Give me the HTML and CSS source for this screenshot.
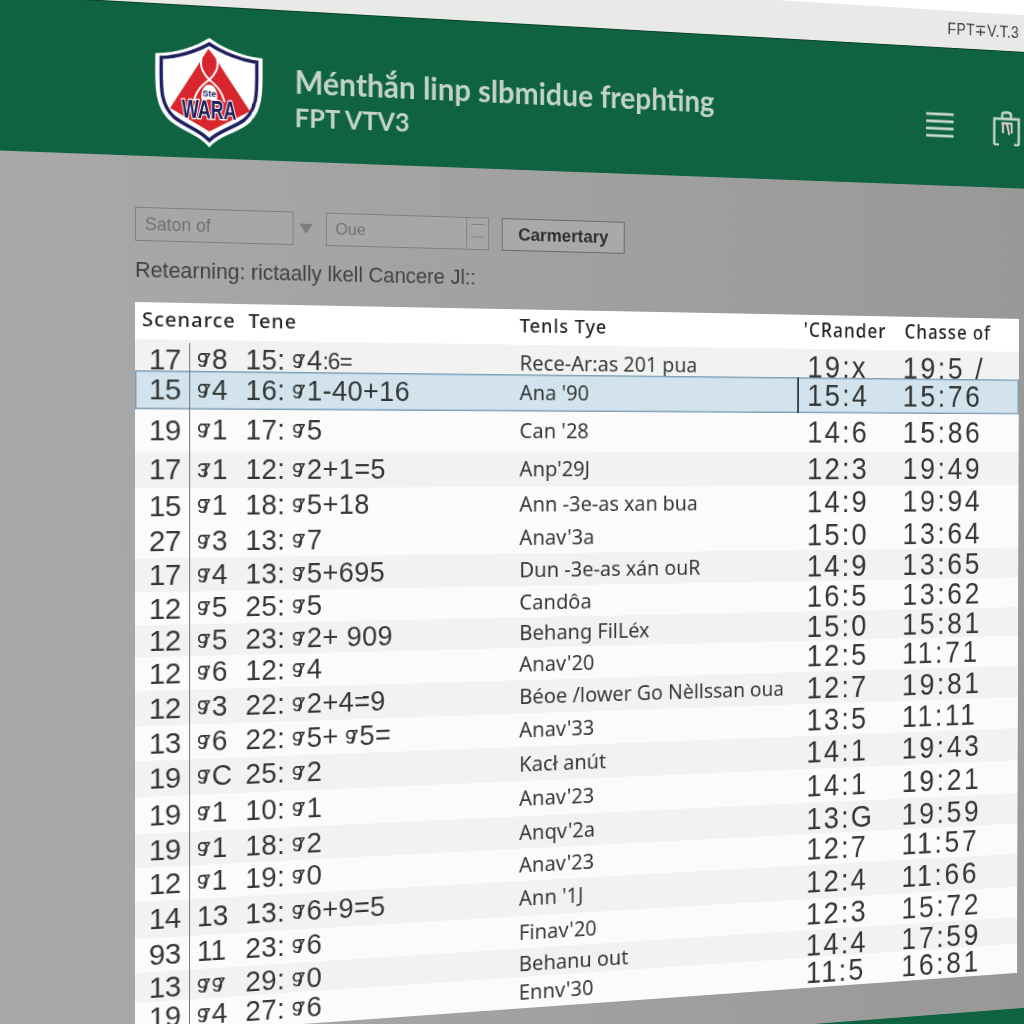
FILE: index.html
```html
<!DOCTYPE html>
<html lang="vi">
<head>
<meta charset="utf-8">
<title>FPT VTV3</title>
<link rel="stylesheet" href="styles.css">
</head>
<body>
<div class="page">
  <div class="topgap"></div>
  <div class="bar"><span class="bar-text">FPT∓V.T.3</span></div>
  <header class="hdr">
    <svg class="logo" viewBox="0 0 110 110">
      <path fill="#fff" d="M55 0C70 10 90 17 110 18C110 50 112 70 95 85C82 95 65 98 55 110C45 98 28 95 15 85C-2 70 0 50 0 18C20 17 40 10 55 0Z"/>
      <path fill="none" stroke="#1e2060" stroke-width="3.5" d="M55 6C68 14 88 21 104 22C104 50 106 68 91 81C79 90 64 93 55 103C46 93 31 90 19 81C4 68 6 50 6 22C22 21 42 14 55 6Z"/>
      <path fill="#d8262c" d="M54 11C60 17 64 24 68 30L97 72L55 94L15 72L42 30C46 24 50 17 54 11Z"/>
      <path fill="none" stroke="#fff" stroke-width="2" d="M47 21C45 30 49 36 55 42C61 36 65 30 63 21M55 42C47 48 42 53 39 64M55 42C63 48 68 53 71 64"/>
      <path fill="#fff" d="M47 62C46 53 50 47 55 47C60 47 64 53 63 62Z"/>
      <text class="logo-small" x="55" y="59" text-anchor="middle">Ste</text>
      <text class="logo-name" x="55" y="81" text-anchor="middle" textLength="56" lengthAdjust="spacingAndGlyphs">WARA</text>
    </svg>
    <div class="title"><div class="title-main">Ménthắn linp slbmidue frephting</div><div class="title-sub">FPT VTV3</div></div>
    <div class="actions">
      <svg class="ic-menu" viewBox="0 0 34 30"><path d="M0 3H34M0 11H34M0 19H34M0 27H34"/></svg>
      <svg class="ic-bag" viewBox="0 0 35 39"><path d="M2 38V9H33V38M2 38H8M33 38H27M12 9V4C12 1 23 1 23 4V9"/><path class="ic-inner" d="M11 14H25M13 14V25M18 14L21 27M24 15V25"/></svg>
    </div>
  </header>
  <main class="main">
    <div class="filters">
      <div class="select">Saton of</div>
      <div class="arrow"></div>
      <div class="input"><span class="input-text">Oue</span><span class="spin"><i></i><i></i></span></div>
      <button class="btn">Carmertary</button>
    </div>
    <div class="caption">Retearning: rictaally lkell Cancere Jl::</div>
    <div class="table">
      <div class="row head"><div class="c1">Scenarce</div><div class="c2"></div><div class="c3">Tene</div><div class="c4">Tenls Tye</div><div class="c5">'CRander</div><div class="c6">Chasse of</div></div>
      <div class="row alt first"><div class="c1">17</div><div class="c2"><span class="g">97</span>8</div><div class="c3">15:<span class="g">97</span>4<small>:6=</small></div><div class="c4">Rece-Ar:as 201 pua</div><div class="c5">19:x</div><div class="c6">19:5 /</div></div>
      <div class="row sel"><div class="c1">15</div><div class="c2"><span class="g">97</span>4</div><div class="c3">16:<span class="g">97</span>1-40+16</div><div class="c4">Ana '90</div><div class="c5">15:4</div><div class="c6">15:76</div></div>
      <div class="row"><div class="c1">19</div><div class="c2"><span class="g">97</span>1</div><div class="c3">17:<span class="g">97</span>5</div><div class="c4">Can '28</div><div class="c5">14:6</div><div class="c6">15:86</div></div>
      <div class="row alt"><div class="c1">17</div><div class="c2"><span class="g">37</span>1</div><div class="c3">12:<span class="g">97</span>2+1=5</div><div class="c4">Anp'29J</div><div class="c5">12:3</div><div class="c6">19:49</div></div>
      <div class="row"><div class="c1">15</div><div class="c2"><span class="g">97</span>1</div><div class="c3">18:<span class="g">97</span>5+18</div><div class="c4">Ann -3e-as xan bua</div><div class="c5">14:9</div><div class="c6">19:94</div></div>
      <div class="row"><div class="c1">27</div><div class="c2"><span class="g">97</span>3</div><div class="c3">13:<span class="g">97</span>7</div><div class="c4">Anav'3a</div><div class="c5">15:0</div><div class="c6">13:64</div></div>
      <div class="row alt"><div class="c1">17</div><div class="c2"><span class="g">97</span>4</div><div class="c3">13:<span class="g">97</span>5+695</div><div class="c4">Dun -3e-as xán ouR</div><div class="c5">14:9</div><div class="c6">13:65</div></div>
      <div class="row"><div class="c1">12</div><div class="c2"><span class="g">97</span>5</div><div class="c3">25:<span class="g">97</span>5</div><div class="c4">Candôa</div><div class="c5">16:5</div><div class="c6">13:62</div></div>
      <div class="row alt"><div class="c1">12</div><div class="c2"><span class="g">97</span>5</div><div class="c3">23:<span class="g">97</span>2+ 909</div><div class="c4">Behang FilLéx</div><div class="c5">15:0</div><div class="c6">15:81</div></div>
      <div class="row"><div class="c1">12</div><div class="c2"><span class="g">97</span>6</div><div class="c3">12:<span class="g">97</span>4</div><div class="c4">Anav'20</div><div class="c5">12:5</div><div class="c6">11:71</div></div>
      <div class="row alt"><div class="c1">12</div><div class="c2"><span class="g">97</span>3</div><div class="c3">22:<span class="g">97</span>2+4=9</div><div class="c4">Béoe /lower Go Nèllssan oua</div><div class="c5">12:7</div><div class="c6">19:81</div></div>
      <div class="row"><div class="c1">13</div><div class="c2"><span class="g">97</span>6</div><div class="c3">22:<span class="g">97</span>5+<span class="g">97</span>5=</div><div class="c4">Anav'33</div><div class="c5">13:5</div><div class="c6">11:11</div></div>
      <div class="row alt"><div class="c1">19</div><div class="c2"><span class="g">97</span>C</div><div class="c3">25:<span class="g">97</span>2</div><div class="c4">Kacł anút</div><div class="c5">14:1</div><div class="c6">19:43</div></div>
      <div class="row"><div class="c1">19</div><div class="c2"><span class="g">97</span>1</div><div class="c3">10:<span class="g">97</span>1</div><div class="c4">Anav'23</div><div class="c5">14:1</div><div class="c6">19:21</div></div>
      <div class="row alt"><div class="c1">19</div><div class="c2"><span class="g">97</span>1</div><div class="c3">18:<span class="g">97</span>2</div><div class="c4">Anqv'2a</div><div class="c5">13:G</div><div class="c6">19:59</div></div>
      <div class="row"><div class="c1">12</div><div class="c2"><span class="g">97</span>1</div><div class="c3">19:<span class="g">97</span>0</div><div class="c4">Anav'23</div><div class="c5">12:7</div><div class="c6">11:57</div></div>
      <div class="row alt"><div class="c1">14</div><div class="c2">13</div><div class="c3">13:<span class="g">97</span>6+9=5</div><div class="c4">Ann '1J</div><div class="c5">12:4</div><div class="c6">11:66</div></div>
      <div class="row"><div class="c1">93</div><div class="c2">11</div><div class="c3">23:<span class="g">97</span>6</div><div class="c4">Finav'20</div><div class="c5">12:3</div><div class="c6">15:72</div></div>
      <div class="row alt"><div class="c1">13</div><div class="c2"><span class="g">97</span><span class="g">97</span></div><div class="c3">29:<span class="g">97</span>0</div><div class="c4">Behanu out</div><div class="c5">14:4</div><div class="c6">17:59</div></div>
      <div class="row"><div class="c1">19</div><div class="c2"><span class="g">97</span>4</div><div class="c3">27:<span class="g">97</span>6</div><div class="c4">Ennv'30</div><div class="c5">11:5</div><div class="c6">16:81</div></div>
    </div>
  </main>
  <footer class="foot"></footer>
</div>
</body>
</html>
```
FILE: styles.css
```css
html, body { margin: 0; height: 100%; overflow: hidden; background: #a6a6a6; }
.page {
  width: 1240px;
  font-family: "Liberation Sans", Arial, sans-serif;
  transform-origin: 0 0;
  transform: matrix3d(1.0089, 0.05598, 0, 0.00012257, 0.000468, 1.00359, 0, 0.000003469, 0, 0, 1, 0, -1.37, -68.86, 0, 0.982201);
}
.topgap { height: 22px; background: #fff; }
.bar {
  height: 41px;
  background: #e9e9e8;
  display: flex;
  align-items: center;
  justify-content: flex-end;
  padding-right: 106px;
}
.bar-text { font-size: 17.5px; letter-spacing: 0.4px; color: #3f4241; }
.hdr {
  height: 152px;
  background: #0f6340;
  border-top: 1px solid #0a3f2b;
  display: flex;
  align-items: flex-start;
  padding-left: 155px;
  padding-right: 104px;
}
.logo { width: 111px; height: 110px; margin-top: 31px; flex: none; }
.logo-small { font: 700 9px "Liberation Sans", sans-serif; fill: #1e2060; }
.logo-name { font: 700 26px "Liberation Sans", sans-serif; fill: #1e2060; stroke: #fff; stroke-width: 2.5; paint-order: stroke; }
.title {
  margin: 53px 0 0 33px;
  font-family: Lato, sans-serif;
  font-weight: 700;
  line-height: 36px;
  color: #c3d3ca;
}
.title-main { font-size: 32px; }
.title-sub { font-size: 27px; }
.actions { margin-left: auto; display: flex; align-items: flex-start; gap: 49px; padding-top: 66px; }
.ic-menu { width: 34px; height: 30px; margin-top: 4px; fill: none; stroke: #c6d8cf; stroke-width: 3; }
.ic-bag { width: 35px; height: 39px; fill: none; stroke: #c0d4ca; stroke-width: 3; }
.ic-inner { stroke: #e0c8cc; stroke-width: 2.5; }
.main {
  height: 920px;
  box-sizing: border-box;
  padding: 51px 0 0 135px;
  background: linear-gradient(90deg, #a9a9a9, #979797);
}
.filters { display: flex; align-items: stretch; height: 34px; }
.select, .input {
  box-sizing: border-box;
  border: 1.5px solid #7e8180;
  background: #a7a7a7;
  color: #6f7170;
  font: 18px "Liberation Sans", sans-serif;
}
.select { width: 163px; padding: 6px 9px; }
.arrow {
  width: 0; height: 0;
  margin: 12px 14px 0 6px;
  border: 7px solid transparent;
  border-top: 10px solid #7c7c7c;
  border-bottom: 0;
}
.input { width: 176px; display: flex; justify-content: space-between; font-size: 17px; }
.input-text { padding: 6px 9px; }
.spin { width: 23px; border-left: 1.5px solid #7e8180; display: flex; flex-direction: column; justify-content: center; gap: 5px; align-items: center; }
.spin i { display: block; width: 15px; height: 7px; border-top: 1.5px solid #7e8180; }
.btn {
  margin-left: 14px;
  width: 138px;
  box-sizing: border-box;
  border: 1.5px solid #666867;
  background: #a9a9a9;
  color: #2d2f2e;
  font: 700 19px "Liberation Sans", sans-serif;
  padding: 0;
}
.caption {
  height: 57px;
  padding-bottom: 4px;
  display: flex;
  align-items: center;
  font: 21.8px "Liberation Sans", sans-serif;
  color: #404241;
}
.table {
  width: 1000px;
  display: grid;
  grid-template-rows: 37px 30.6px 39px 42px 37.4px 36px 34.5px 34px 32.5px 32px 34px 35.5px 34.5px 36px 37.5px 33.5px 34px 37px 33.7px 30.3px 33px;
  background: #fbfbfb;
  color: #333635;
}
.row {
  display: grid;
  grid-template-columns: 56px 57px 294px 319.5px 128.5px 145px;
  align-items: stretch;
  background: #fbfbfb;
}
.row > div { display: flex; align-items: center; white-space: nowrap; line-height: 1; }
.alt { background: #f1f2f2; }
.c1 { padding-left: 14px; border-right: 1.5px solid #6c7270; font-size: 30px; letter-spacing: -0.5px; box-sizing: border-box; }
.c2 { padding-left: 7px; font-size: 29px; }
.c3 { font-size: 29px; letter-spacing: 0.4px; }
.c3 small { font-size: 24px; letter-spacing: -1px; }
.c4 { font: 22.6px "Noto Sans", sans-serif; color: #363938; }
.c5 { padding-left: 10.5px; font-size: 33px; letter-spacing: 2.6px; border-left: 2px solid transparent; box-sizing: border-box; }
.c6 { font-size: 33px; letter-spacing: 3.3px; }
.g { font-size: 21px; letter-spacing: -9px; margin: 0 10px 0 7px; }
.c2 .g { margin-left: 0; }
.first { padding-top: 3px; height: 30.6px; box-sizing: border-box; }
.head { background: #fff; }
.head > div { font: 500 20.5px "Noto Sans", sans-serif; letter-spacing: 1px; color: #232625; border: 0; padding-bottom: 6px; box-sizing: border-box; }
.head .c1 { padding-left: 7px; }
.head .c3 { padding-left: 3px; }
.head .c6 { padding-left: 2px; font-size: 21px; letter-spacing: 1.2px; }
.head .c5 { padding-left: 8px; font-size: 21px; letter-spacing: 1.2px; }
.sel { background: #d2e3ee; box-shadow: inset 0 0 0 1.5px #7f9fb5; }
.sel .c5 { border-left-color: #2c3f4b; }
.foot { height: 300px; background: #0f6340; }
```
